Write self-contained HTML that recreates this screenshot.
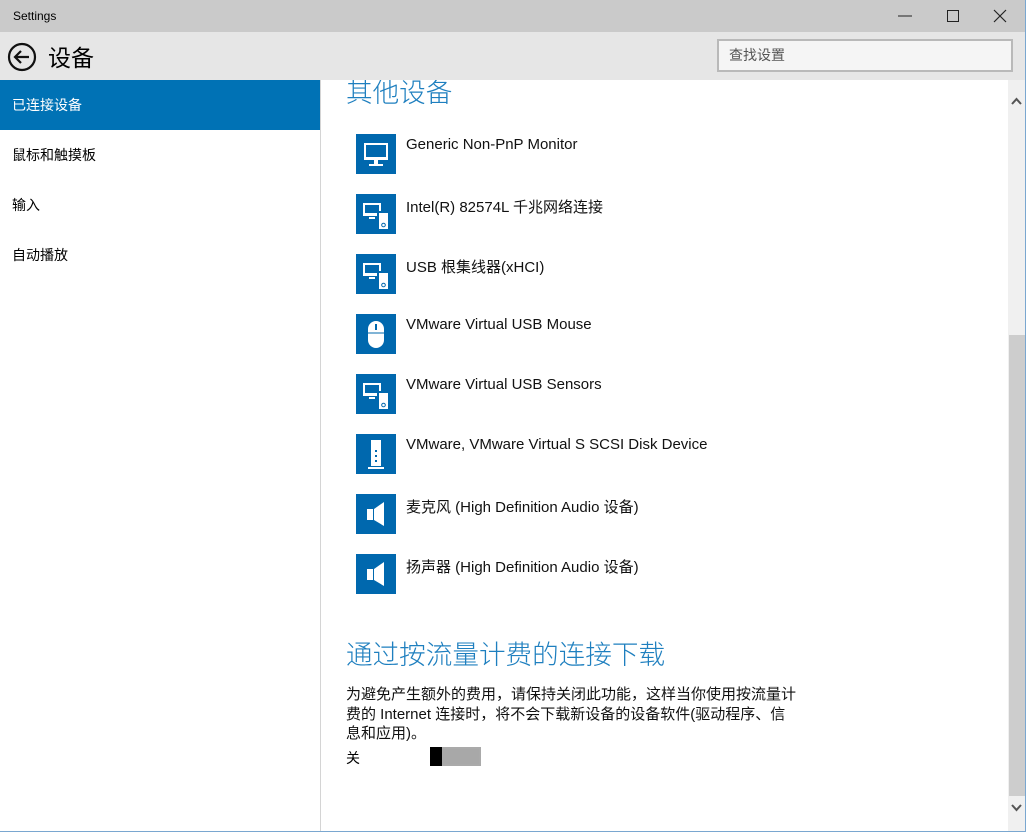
<!DOCTYPE html>
<html><head><meta charset="utf-8"><style>
*{margin:0;padding:0;box-sizing:border-box}
body{width:1026px;height:832px;overflow:hidden;background:#fff;font-family:"Liberation Sans","Noto Sans CJK SC",sans-serif;position:relative;color:#000}
.tb{position:absolute;left:0;top:0;width:1026px;height:32px;background:#cacaca;font-size:12px}
.hd{position:absolute;left:0;top:32px;width:1026px;height:48px;background:#e6e6e6}
.side{position:absolute;left:0;top:80px;width:321px;height:752px;background:#fff;border-right:1px solid #d4d4d4}
.si{height:50px;line-height:50px;padding-left:12px;font-size:14px}
.sel{background:#0072b5;color:#fff}
.main{position:absolute;left:322px;top:80px;width:686px;height:752px;overflow:hidden}
.h{position:absolute;left:24px;font-size:26.6px;color:#1e7fbf;font-family:"Noto Sans CJK SC",sans-serif;font-weight:300;line-height:32px}
.it{position:absolute;left:34px;height:40px}
.ic{position:absolute;left:0;top:0;width:40px;height:40px;background:#0068ae}
.ic svg{position:absolute;left:0;top:0}
.it span{position:absolute;left:50px;top:2px;font-size:15px;white-space:nowrap;color:#111}
.sb{position:absolute;left:1008px;top:80px;width:17px;height:752px;background:#f0f0f0}
.th{position:absolute;left:1px;top:255px;width:16px;height:461px;background:#cdcdcd}
</style></head><body>
<div class="tb"><span style="position:absolute;left:13px;top:9px">Settings</span>
<svg width="1026" height="32" style="position:absolute;left:0;top:0"><line x1="898" y1="16" x2="912" y2="16" stroke="#222"/><rect x="947.5" y="10.5" width="11" height="11" fill="none" stroke="#222"/><path d="M994 10L1006 22M1006 10L994 22" stroke="#222" stroke-width="1.2"/></svg></div>
<div class="hd">
<svg width="40" height="40" style="position:absolute;left:5px;top:7px"><circle cx="17" cy="18" r="13" fill="none" stroke="#111" stroke-width="2.2"/><path d="M24 18H11M16 12L10 18L16 24" fill="none" stroke="#111" stroke-width="2.2"/></svg>
<span style="position:absolute;left:48px;top:7px;font-size:23px;font-family:'Noto Sans CJK SC',sans-serif">设备</span>
<div style="position:absolute;left:717px;top:7px;width:296px;height:33px;border:2px solid #b9b9b9;background:#f5f5f5;font-size:14px;color:#555;padding:4px 10px">查找设置</div>
</div>
<div class="side"><div class="si sel">已连接设备</div><div class="si">鼠标和触摸板</div><div class="si">输入</div><div class="si">自动播放</div></div>
<div class="main">
<div class="h" style="top:-5px">其他设备</div>
<div class="it" style="top:54px"><div class="ic"><svg width="40" height="40"><rect x="8" y="9" width="24" height="17" fill="#fff"/><rect x="10" y="11" width="20" height="12" fill="#0068ae"/><rect x="18" y="26" width="4" height="4" fill="#fff"/><rect x="13" y="30" width="14" height="2" fill="#fff"/></svg></div><span>Generic Non-PnP Monitor</span></div>
<div class="it" style="top:114px"><div class="ic"><svg width="40" height="40"><rect x="7" y="9" width="18" height="13" fill="#fff"/><rect x="9" y="11" width="14" height="8" fill="#0068ae"/><rect x="13" y="23" width="6" height="2" fill="#fff"/><rect x="21" y="17" width="13" height="20" fill="#0068ae"/><rect x="23" y="19" width="9" height="16" fill="#fff"/><circle cx="27.5" cy="31" r="1.8" fill="none" stroke="#0068ae"/></svg></div><span>Intel(R) 82574L 千兆网络连接</span></div>
<div class="it" style="top:174px"><div class="ic"><svg width="40" height="40"><rect x="7" y="9" width="18" height="13" fill="#fff"/><rect x="9" y="11" width="14" height="8" fill="#0068ae"/><rect x="13" y="23" width="6" height="2" fill="#fff"/><rect x="21" y="17" width="13" height="20" fill="#0068ae"/><rect x="23" y="19" width="9" height="16" fill="#fff"/><circle cx="27.5" cy="31" r="1.8" fill="none" stroke="#0068ae"/></svg></div><span>USB 根集线器(xHCI)</span></div>
<div class="it" style="top:234px"><div class="ic"><svg width="40" height="40"><rect x="12" y="7" width="16" height="27" rx="8" fill="#fff"/><line x1="12" y1="19" x2="28" y2="19" stroke="#0068ae"/><rect x="19" y="10" width="2" height="6" fill="#0068ae"/></svg></div><span>VMware Virtual USB Mouse</span></div>
<div class="it" style="top:294px"><div class="ic"><svg width="40" height="40"><rect x="7" y="9" width="18" height="13" fill="#fff"/><rect x="9" y="11" width="14" height="8" fill="#0068ae"/><rect x="13" y="23" width="6" height="2" fill="#fff"/><rect x="21" y="17" width="13" height="20" fill="#0068ae"/><rect x="23" y="19" width="9" height="16" fill="#fff"/><circle cx="27.5" cy="31" r="1.8" fill="none" stroke="#0068ae"/></svg></div><span>VMware Virtual USB Sensors</span></div>
<div class="it" style="top:354px"><div class="ic"><svg width="40" height="40"><rect x="15" y="6" width="10" height="26" fill="#fff"/><rect x="19" y="16" width="2" height="2" fill="#0068ae"/><rect x="19" y="21" width="2" height="2" fill="#0068ae"/><rect x="19" y="26" width="2" height="2" fill="#0068ae"/><rect x="12" y="33" width="16" height="2" fill="#fff"/></svg></div><span>VMware, VMware Virtual S SCSI Disk Device</span></div>
<div class="it" style="top:414px"><div class="ic"><svg width="40" height="40"><rect x="11" y="15" width="6" height="11" fill="#fff"/><path d="M18 15L28 8V32L18 26Z" fill="#fff"/></svg></div><span>麦克风 (High Definition Audio 设备)</span></div>
<div class="it" style="top:474px"><div class="ic"><svg width="40" height="40"><rect x="11" y="15" width="6" height="11" fill="#fff"/><path d="M18 15L28 8V32L18 26Z" fill="#fff"/></svg></div><span>扬声器 (High Definition Audio 设备)</span></div>
<div class="h" style="top:557px">通过按流量计费的连接下载</div>
<div style="position:absolute;left:24px;top:605px;width:453px;font-size:15px;line-height:19.5px;color:#111">为避免产生额外的费用，请保持关闭此功能，这样当你使用按流量计费的 Internet 连接时，将不会下载新设备的设备软件(驱动程序、信息和应用)。</div>
<div style="position:absolute;left:24px;top:668px;font-size:14px">关</div>
<div style="position:absolute;left:108px;top:667px;width:51px;height:19px;border:2px solid #aaa;background:#a8a8a8"><div style="position:absolute;left:-2px;top:-2px;width:12px;height:19px;background:#000"></div></div>
</div>
<div class="sb"><svg width="17" height="752" style="position:absolute;left:0;top:0"><path d="M4 24L8.5 19L13 24" fill="none" stroke="#555" stroke-width="2"/><path d="M4 725L8.5 730L13 725" fill="none" stroke="#555" stroke-width="2"/></svg><div class="th"></div></div>
<div style="position:absolute;left:1025px;top:0;width:1px;height:832px;background:#7aa7d0"></div>
<div style="position:absolute;left:0;top:831px;width:1026px;height:1px;background:#7aa7d0"></div>
</body></html>
